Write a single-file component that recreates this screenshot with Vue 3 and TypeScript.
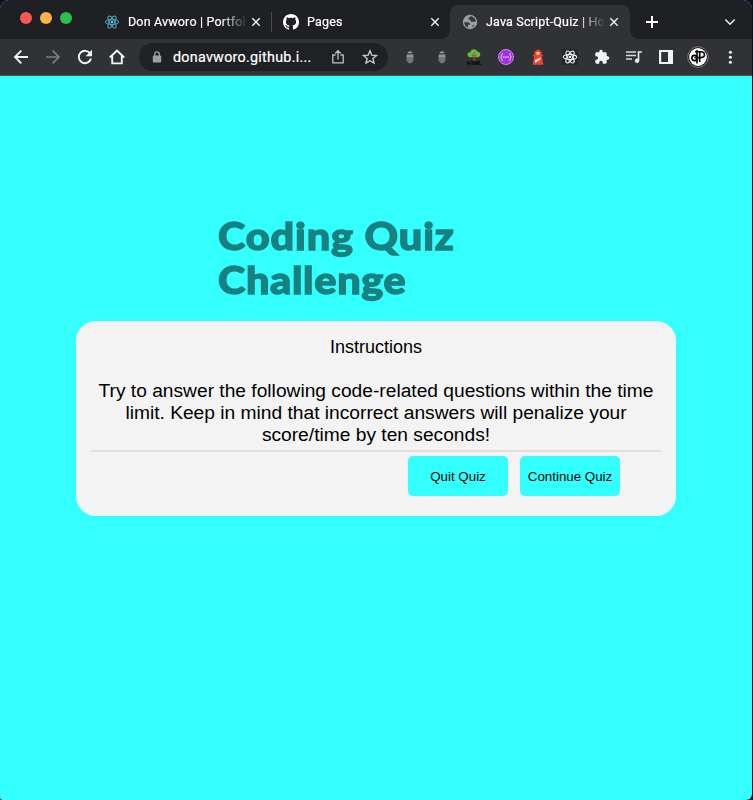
<script setup lang="ts">
interface Tab {
  title: string
  icon: 'react' | 'github' | 'globe'
  active: boolean
}

const tabs: Tab[] = [
  { title: 'Don Avworo | Portfol', icon: 'react', active: false },
  { title: 'Pages', icon: 'github', active: false },
  { title: 'Java Script-Quiz | Ho', icon: 'globe', active: true },
]

const lights: string[] = ['red', 'amber', 'green']
const angles: number[] = [0, 60, 120]
const lines: string[] = [
  'Try to answer the following code-related questions within the time',
  'limit. Keep in mind that incorrect answers will penalize your',
  'score/time by ten seconds!',
]
</script>

<template>
  <div class="desktop">
    <div class="window">
      <header class="tabstrip">
        <div class="lights">
          <span v-for="l in lights" :key="l" class="light" :class="l"></span>
        </div>
        <div v-for="t in tabs" :key="t.title" class="tab" :class="[t.icon, { active: t.active }]">
          <svg v-if="t.icon === 'react'" class="fav" viewBox="0 0 16 16" fill="none" stroke="#4fa9bf" stroke-width="1">
            <ellipse v-for="a in angles" :key="a" cx="8" cy="8" rx="6.6" ry="2.6" :transform="`rotate(${a} 8 8)`" />
            <circle cx="8" cy="8" r="1.3" fill="#61dafb" stroke="none" />
          </svg>
          <svg v-else-if="t.icon === 'github'" class="fav" viewBox="0 0 16 16" fill="#fff">
            <path d="M8 0C3.58 0 0 3.58 0 8c0 3.54 2.29 6.53 5.47 7.59.4.07.55-.17.55-.38 0-.19-.01-.82-.01-1.49-2.01.37-2.53-.49-2.69-.94-.09-.23-.48-.94-.82-1.13-.28-.15-.68-.52-.01-.53.63-.01 1.08.58 1.23.82.72 1.21 1.87.87 2.33.66.07-.52.28-.87.51-1.07-1.78-.2-3.64-.89-3.64-3.95 0-.87.31-1.59.82-2.15-.08-.2-.36-1.02.08-2.12 0 0 .67-.21 2.2.82.64-.18 1.32-.27 2-.27s1.36.09 2 .27c1.53-1.04 2.2-.82 2.2-.82.44 1.1.16 1.92.08 2.12.51.56.82 1.27.82 2.15 0 3.07-1.87 3.75-3.65 3.95.29.25.54.73.54 1.48 0 1.07-.01 1.93-.01 2.2 0 .21.15.46.55.38A8.01 8.01 0 0 0 16 8c0-4.42-3.58-8-8-8z" />
          </svg>
          <svg v-else class="fav" viewBox="0 0 16 16">
            <circle cx="8" cy="8" r="7.2" fill="#9aa0a6" />
            <path d="M2.2 8.2h3.6c1.2.1 2.2.8 2.2 1.9v.7H5.9v2.7C3.7 12.6 2.2 10.600 2.200 8.200zM8.300 2.200c-.2 1-.9 1.500-1.900 1.600v1.600H8c.1 1.600 1.100 2.500 2.900 2.400h2.900c0-2.900-2.500-5.600-5.500-5.600zM9.600 13.500l3.200-2.500H11z" fill="#35363a" />
          </svg>
          <span class="title">{{ t.title }}</span>
          <svg class="close" viewBox="0 0 10 10" stroke="#f1f3f4" stroke-width="1.4"><path d="M1.300 1.300l7.400 7.400M8.700 1.300L1.300 8.700" /></svg>
        </div>
        <svg class="plus" viewBox="0 0 14 14" stroke="#fff" stroke-width="2"><path d="M7 1v12M1 7h12" /></svg>
        <svg class="chevron" viewBox="0 0 12 12" fill="none" stroke="#e8eaed" stroke-width="1.6"><path d="M1.300 3.500L6 8.200l4.700-4.700" /></svg>
      </header>

      <nav class="toolbar">
        <span class="cell"><svg viewBox="0 0 16 16" fill="none" stroke="#f1f3f4" stroke-width="1.900"><path d="M15 8H2.200M8.300 1.700L2 8l6.300 6.300" /></svg></span>
        <span class="cell"><svg viewBox="0 0 16 16" fill="none" stroke="#7d7f82" stroke-width="1.700"><path d="M1 8h12.800M7.700 1.700L14 8l-6.300 6.300" /></svg></span>
        <span class="cell"><svg viewBox="0 0 16 16"><path d="M13.300 4.800A6.200 6.200 0 1 0 14 9.600" fill="none" stroke="#f1f3f4" stroke-width="1.900" /><path d="M15 .8v6.400H8.600z" fill="#f1f3f4" /></svg></span>
        <span class="cell"><svg viewBox="0 0 16 16" fill="none" stroke="#f1f3f4" stroke-width="1.900"><path d="M.8 8.500L8 1.500l7.200 7M3.200 7v7.400h9.600V7" /></svg></span>

        <div class="address">
          <svg class="lock" viewBox="0 0 10 12"><path d="M2.700 5V3.200a2.300 2.300 0 0 1 4.600 0V5" fill="none" stroke="#9aa0a6" stroke-width="1.300" /><rect x=".8" y="4.500" width="8.400" height="7" rx="1" fill="#9aa0a6" /></svg>
          <span class="url">donavworo.github.i...</span>
          <svg class="share" viewBox="0 0 14 16" fill="none" stroke="#bdc1c6" stroke-width="1.300"><path d="M4.500 6H1.800v7.800h10.400V6H9.500M7 10.500V2M4.200 4.500L7 1.700l2.800 2.800" /></svg>
          <svg class="star" viewBox="0 0 16 16" fill="none" stroke="#c6c9cd" stroke-width="1.400"><path d="M8 1.800l1.800 4.300 4.700.4-3.600 3 1.100 4.600L8 11.700l-4 2.400 1.100-4.600-3.600-3 4.700-.4z" /></svg>
        </div>

        <span v-for="n in 2" :key="n" class="cell">
          <svg viewBox="0 0 16 16"><path d="M3.500 7l2 1M12.500 7l-2 1M3.500 12l2-1M12.500 12l-2-1" stroke="#414245" /><path d="M5.300 4.200a2.800 2.500 0 0 1 5.400 0z" fill="#98999b" /><path d="M4.500 5.600h7V10c0 2.300-1.500 4.200-3.500 4.500-2-.3-3.500-2.200-3.500-4.500z" fill="#737476" /><path d="M5 5.800h6v2.500H5z" fill="#929395" /></svg>
        </span>
        <span class="cell">
          <svg viewBox="0 0 16 16"><path d="M8 .2c2 0 3 1.200 3 2.300 2.200.1 3.500 1.600 3.300 3.200-.2 1.700-1.500 2.600-3.300 2.600H5C2.800 8.300 1.500 7 1.500 5.400c0-1.500 1.500-2.500 3-2.500C4.700 1.200 6.300.2 8 .2z" fill="#5ac13c" /><path d="M8.100 3v9M5.800 5.800L8.100 8l2.300-2.200" fill="none" stroke="#a4572a" stroke-width="1.200" /><text x="8" y="15.700" text-anchor="middle" class="html" textLength="15">HTML</text></svg>
        </span>
        <span class="cell">
          <svg viewBox="0 0 16 16"><circle cx="8" cy="8" r="7.500" fill="#a52fe0" stroke="#dca9f5" stroke-width=".8" /><path d="M5 4.500c-1.400 0-1.300.5-1.300 1.700S3.400 7.800 2.600 8c.8.200 1.100.7 1.100 1.800s-.1 1.700 1.300 1.700M11 4.500c1.400 0 1.300.5 1.300 1.700s.3 1.600 1.100 1.800c-.8.200-1.100.7-1.100 1.800s.1 1.700-1.300 1.700" fill="none" stroke="#f3dcff" stroke-width=".9" /><path d="M5.300 7.400h1.300v1.300H5.300zM7.400 7.400h1.300v1.300H7.400zM9.500 7.400h1.300v1.300H9.500z" fill="#fff" /></svg>
        </span>
        <span class="cell">
          <svg viewBox="0 0 16 16"><path d="M8 .3l3.600 2.500v3h1.400v1.400h-1.200l1.600 8.500H2.600l1.600-8.500H3V5.800h1.400v-3z" fill="#ef4130" /><path d="M6.500 3h3v2.700h-3z" fill="#ffd875" /><path d="M5.200 11l5.200-2.500.2 2.100-5.500 3.100z" fill="#fff" /></svg>
        </span>
        <span class="cell">
          <svg viewBox="0 0 16 16"><path d="M0 0h16v16H0z" fill="#252628" /><g fill="none" stroke="#f1f3f4" stroke-width="1.050"><ellipse v-for="a in angles" :key="a" cx="8" cy="8" rx="6.700" ry="2.600" :transform="`rotate(${a} 8 8)`" /></g><circle cx="8" cy="8" r="1.300" fill="#fff" /></svg>
        </span>
        <span class="cell">
          <svg viewBox="0 0 24 24" fill="#f1f3f4"><path d="M20.500 11H19V7c0-1.100-.9-2-2-2h-4V3.500a2.500 2.500 0 0 0-5 0V5H4c-1.100 0-2 .9-2 2v3.800h1.500a2.700 2.700 0 0 1 0 5.400H2V20c0 1.100.9 2 2 2h3.800v-1.500a2.700 2.700 0 0 1 5.400 0V22H17c1.100 0 2-.9 2-2v-4h1.500a2.500 2.500 0 0 0 0-5z" /></svg>
        </span>
        <span class="cell">
          <svg viewBox="0 0 16 16"><path d="M0 3h10M0 6.500h10M0 10h6" stroke="#d6d8db" stroke-width="1.500" /><path d="M15.800 3h-3.300v8.500" fill="none" stroke="#e8eaed" stroke-width="1.600" /><circle cx="11.100" cy="11.700" r="2.200" fill="#e8eaed" /></svg>
        </span>
        <span class="cell">
          <svg viewBox="0 0 16 16"><path d="M1 1h14v14H1zM3.200 3v10H10V3z" fill="#f1f3f4" fill-rule="evenodd" /></svg>
        </span>
        <span class="cell">
          <svg class="avatar" viewBox="0 0 22 22"><circle cx="11" cy="11" r="10.300" fill="#111" stroke="#8b8681" stroke-width=".9" /><circle cx="11" cy="11" r="8.900" fill="#fafafa" /><g fill="none" stroke="#050505" stroke-width="1.600"><path d="M10 4v13.500" /><ellipse cx="7.600" cy="12" rx="2.700" ry="2.600" /><path d="M8 5.700h5.500c2.700 0 4 1 4 2.900s-1.400 3-3.700 3H7.500M12.700 5.500V16" /></g></svg>
        </span>
        <span class="cell">
          <svg viewBox="0 0 16 16" fill="#f1f3f4"><circle cx="8.400" cy="3.300" r="1.550" /><circle cx="8.400" cy="8.300" r="1.550" /><circle cx="8.400" cy="13.300" r="1.550" /></svg>
        </span>
      </nav>

      <main class="page">
        <h1 class="heading">
          <span class="row first">Coding Quiz</span>
          <span class="row second">Challenge</span>
        </h1>
        <section class="card">
          <div class="label">Instructions</div>
          <p class="copy"><span v-for="l in lines" :key="l" class="line">{{ l }}</span></p>
          <div class="actions">
            <button type="button">Quit Quiz</button>
            <button type="button">Continue Quiz</button>
          </div>
        </section>
      </main>
    </div>
  </div>
</template>

<style>
body { margin: 0; background: #120d22; }
</style>

<style scoped>
.desktop { width: 753px; height: 800px; background: #120d22; overflow: hidden; }
.window { width: 752px; height: 800px; box-sizing: border-box; border-radius: 9px 9px 6px 3px; overflow: hidden; background: #33ffff; display: flex; flex-direction: column; }
.tabstrip { height: 39px; flex: none; background: #1f2023; display: flex; align-items: flex-start; }
.lights { width: 72px; height: 36px; padding-left: 20px; display: flex; gap: 8px; align-items: center; flex: none; }
.light { width: 12px; height: 12px; border-radius: 50%; }
.red { background: #ff5753; }
.amber { background: #fdb24b; }
.green { background: #2ac14b; }
.tab { width: 179px; height: 34px; margin-top: 5px; box-sizing: border-box; padding-left: 12px; display: flex; align-items: center; position: relative; flex: none; }
.tab.github::before { content: ''; position: absolute; left: 0; top: 7px; width: 1px; height: 20px; background: #4b4c50; }
.tab.active { width: 180px; background: #313235; border-radius: 8px 8px 0 0; }
.tab.active::before, .tab.active::after { content: ''; position: absolute; bottom: 0; width: 8px; height: 8px; }
.tab.active::before { left: -8px; background: radial-gradient(circle at 0 0, transparent 7.5px, #313235 8px); }
.tab.active::after { right: -8px; background: radial-gradient(circle at 100% 0, transparent 7.5px, #313235 8px); }
.fav { width: 16px; height: 16px; flex: none; }
.title { width: 120px; margin-left: 8px; white-space: nowrap; font: 400 12.5px/18px Roboto, sans-serif; letter-spacing: .17px; color: #fff; -webkit-text-stroke: .2px; -webkit-mask-image: linear-gradient(90deg, #000 92px, transparent 120px); mask-image: linear-gradient(90deg, #000 92px, transparent 120px); flex: none; }
.close { width: 10px; height: 10px; margin-left: 3px; flex: none; }
.plus { width: 14px; height: 14px; margin: 15px 0 0 15px; }
.chevron { width: 12px; height: 12px; margin: 16px 0 0 65px; }
.toolbar { height: 37px; flex: none; box-sizing: border-box; border-bottom: 1px solid #515257; background: #313235; padding-left: 5px; display: flex; align-items: center; }
.cell { width: 32px; height: 32px; display: flex; align-items: center; justify-content: center; flex: none; }
.cell svg { width: 16px; height: 16px; overflow: visible; }
.cell .avatar { width: 22px; height: 22px; }
.html { font: 900 5.500px "Open Sans", sans-serif; fill: #0b0b0b; }
.address { width: 249px; height: 28px; margin: 0 6px; border-radius: 14px; background: #202124; display: flex; align-items: center; flex: none; }
.lock { width: 10px; height: 12px; margin-left: 13px; }
.url { width: 147px; margin-left: 11px; font: 400 14.3px/20px Roboto, sans-serif; color: #fff; -webkit-text-stroke: .2px; white-space: nowrap; letter-spacing: .28px; }
.share { width: 14px; height: 16px; margin-left: 11px; }
.star { width: 16px; height: 16px; margin-left: 17px; }
.page { flex: 1; display: flex; flex-direction: column; align-items: center; padding-top: 137px; font-family: "Liberation Sans", Arial, sans-serif; }
.heading { width: 316px; margin: 0; font: 900 38px/44px Lato, sans-serif; color: #198080; -webkit-text-stroke: 1.3px #198080; }
.row { display: block; white-space: nowrap; transform-origin: left; transform: scaleX(1.09); }
.first { letter-spacing: .8px; }
.second { letter-spacing: .6px; }
.card { width: 600px; height: 195px; margin-top: 20px; box-sizing: border-box; padding: 15px; border-radius: 20px; background: #f3f3f3; color: #000; text-align: center; }
.label { font-size: 18px; line-height: 22px; }
.copy { margin: 22px 0 0; padding-bottom: 4px; border-bottom: 2px solid #dedede; font-size: 19.2px; line-height: 22px; }
.line { display: block; white-space: nowrap; }
.actions { display: flex; justify-content: flex-end; gap: 12px; padding: 4px 41px 0 0; }
button { width: 100px; height: 40px; padding: 0; border: 0; border-radius: 5px; background: #33ffff; color: #000; font: 13.333px "Liberation Sans", Arial, sans-serif; white-space: nowrap; }
</style>
